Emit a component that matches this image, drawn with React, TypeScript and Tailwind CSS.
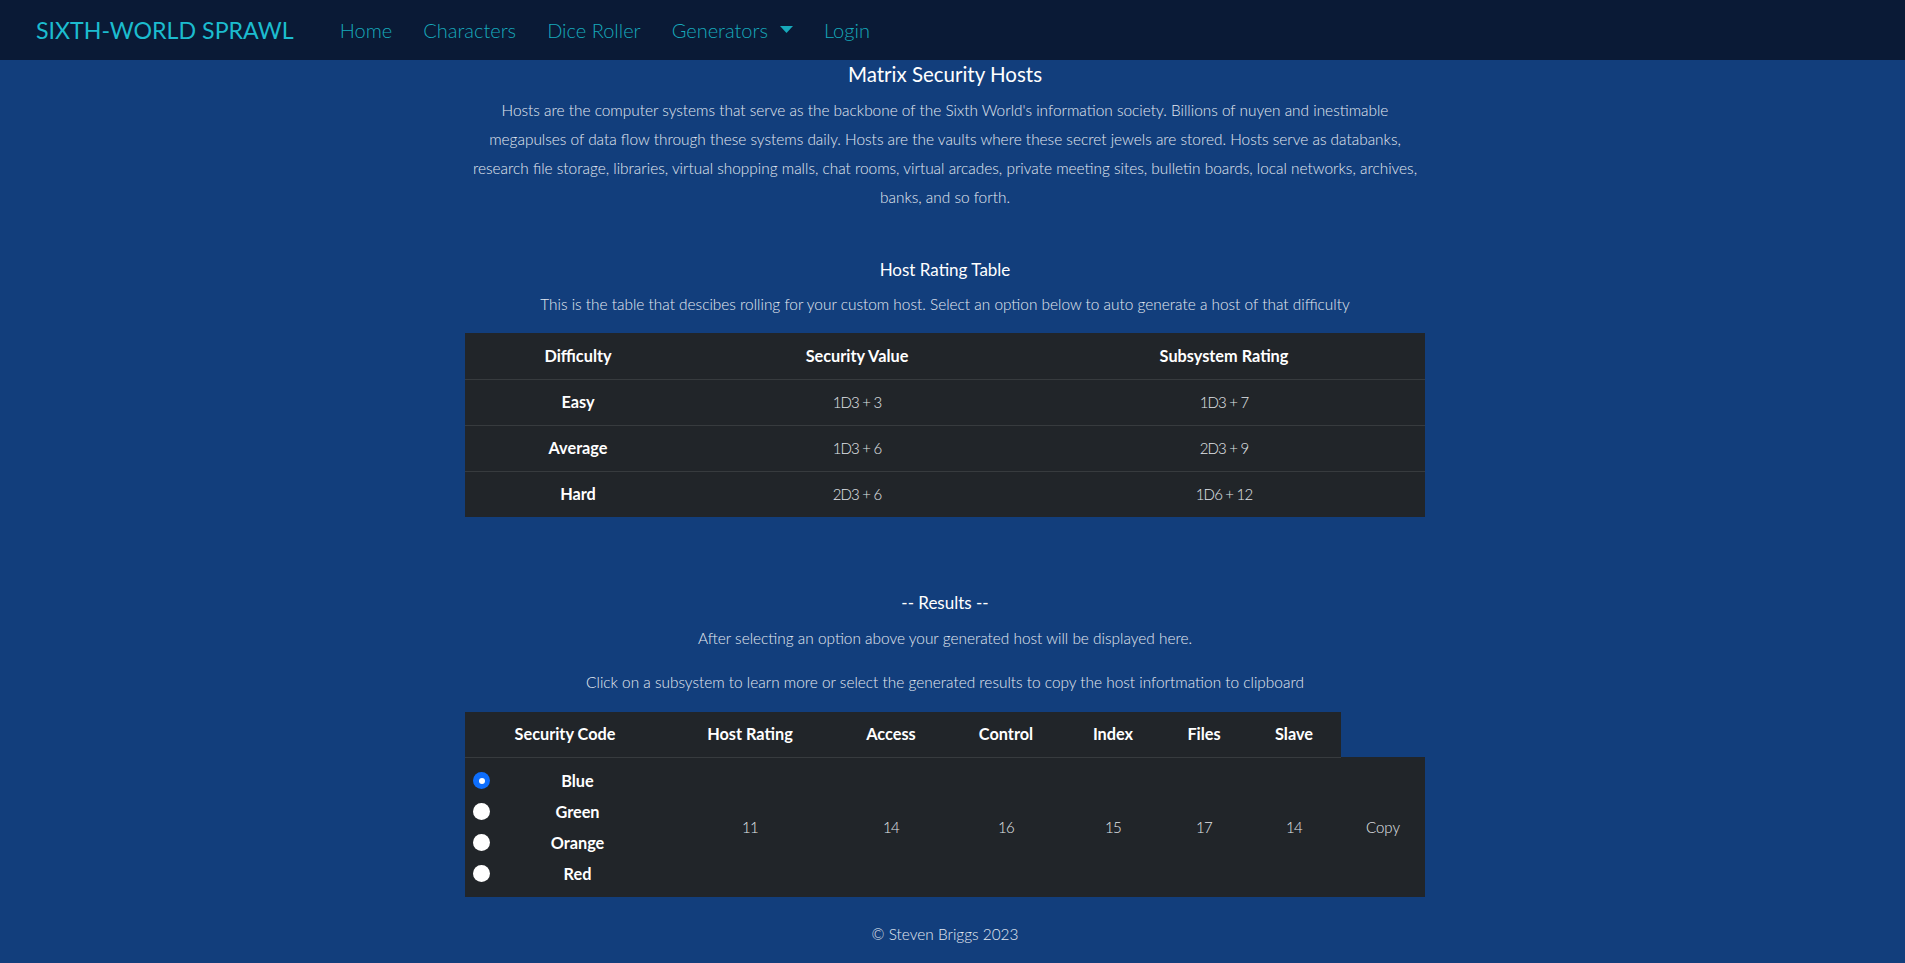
const navLinks = ["Home", "Characters", "Dice Roller"];

const ratingRows = [
  { level: "Easy", security: "1D3 + 3", subsystem: "1D3 + 7" },
  { level: "Average", security: "1D3 + 6", subsystem: "2D3 + 9" },
  { level: "Hard", security: "2D3 + 6", subsystem: "1D6 + 12" },
];

const resultCols = [
  { label: "Host Rating", w: "w-[170px]", value: "11" },
  { label: "Access", w: "w-[112px]", value: "14" },
  { label: "Control", w: "w-[118px]", value: "16" },
  { label: "Index", w: "w-[96px]", value: "15" },
  { label: "Files", w: "w-[86px]", value: "17" },
  { label: "Slave", w: "w-[94px]", value: "14" },
];

const codes = ["Blue", "Green", "Orange", "Red"];

const intro = [
  "Hosts are the computer systems that serve as the backbone of the Sixth World's information society. Billions of nuyen and inestimable",
  "megapulses of data flow through these systems daily. Hosts are the vaults where these secret jewels are stored. Hosts serve as databanks,",
  "research file storage, libraries, virtual shopping malls, chat rooms, virtual arcades, private meeting sites, bulletin boards, local networks, archives,",
  "banks, and so forth.",
];

function Radio({ checked }: { checked?: boolean }) {
  return checked ? (
    <span className="flex h-[17px] w-[17px] shrink-0 items-center justify-center rounded-full bg-[#0d6efd]">
      <span className="h-[6px] w-[6px] rounded-full bg-white" />
    </span>
  ) : (
    <span className="h-[17px] w-[17px] shrink-0 rounded-full bg-white" />
  );
}

export default function App() {
  return (
    <div className="min-h-[963px] bg-[#123e7c] font-['Lato',sans-serif] font-light text-[#e3e9f1]">
      <nav className="flex h-[60px] items-center bg-[#0a1a36] pl-[36px]">
        <span className="text-[23.2px] font-normal text-[#1cbccf]">SIXTH-WORLD SPRAWL</span>
        <div className="ml-[46px] flex items-center gap-[31px] text-[20px] text-[#17a9bb]">
          {navLinks.map((l) => (
            <span key={l}>{l}</span>
          ))}
          <span className="flex items-center gap-[12px]">
            Generators
            <svg width="13" height="8" viewBox="0 0 13 8">
              <path d="M0 0h13L6.5 7z" fill="#17a9bb" />
            </svg>
          </span>
          <span>Login</span>
        </div>
      </nav>

      <main className="flex justify-center pr-[15px]">
        <div className="flex w-[960px] flex-col items-center text-center text-[15.4px]">
          <h4 className="text-[20.5px] font-normal leading-[29px] text-white">Matrix Security Hosts</h4>
          <p className="mt-[7px] leading-[29px]">
            {intro.map((line) => (
              <span key={line} className="block whitespace-nowrap">
                {line}
              </span>
            ))}
          </p>

          <h5 className="mt-[44px] text-[17px] font-normal leading-[28px] text-white">Host Rating Table</h5>
          <p className="mt-[6px] leading-[28px]">
            This is the table that descibes rolling for your custom host. Select an option below to auto generate a host of that difficulty
          </p>

          <table className="mt-[15px] w-[960px] border-collapse bg-[#212529] text-[16.3px]">
            <thead>
              <tr className="h-[46px] border-b border-[#373b3e] text-white">
                <th className="w-[226px] font-bold">Difficulty</th>
                <th className="w-[332px] font-bold">Security Value</th>
                <th className="font-bold">Subsystem Rating</th>
              </tr>
            </thead>
            <tbody>
              {ratingRows.map((r, i) => (
                <tr key={r.level} className={`h-[46px] ${i < 2 ? "border-b border-[#373b3e]" : ""}`}>
                  <td className="font-bold text-white">{r.level}</td>
                  <td className="text-[15px] tracking-[-0.8px] text-[#e2e6ea]">{r.security}</td>
                  <td className="text-[15px] tracking-[-0.8px] text-[#e2e6ea]">{r.subsystem}</td>
                </tr>
              ))}
            </tbody>
          </table>

          <h5 className="mt-[72px] text-[17px] font-normal leading-[28px] text-white">-- Results --</h5>
          <p className="mt-[7px] leading-[28px]">After selecting an option above your generated host will be displayed here.</p>
          <p className="mt-[16px] leading-[28px]">
            Click on a subsystem to learn more or select the generated results to copy the host infortmation to clipboard
          </p>

          <table className="mt-[16px] w-[960px] border-collapse text-[16.3px]">
            <thead>
              <tr className="h-[45px] text-white">
                <th className="w-[200px] border-b border-[#373b3e] bg-[#212529] font-bold">Security Code</th>
                {resultCols.map((c) => (
                  <th key={c.label} className={`${c.w} border-b border-[#373b3e] bg-[#212529] font-bold`}>
                    {c.label}
                  </th>
                ))}
              </tr>
            </thead>
            <tbody>
              <tr className="h-[140px] bg-[#212529]">
                <td className="pl-[8px]">
                  <div className="flex flex-col gap-[8px]">
                    {codes.map((c, i) => (
                      <div key={c} className="flex h-[23px] items-center">
                        <Radio checked={i === 0} />
                        <span className="flex-1 font-bold text-white">{c}</span>
                      </div>
                    ))}
                  </div>
                </td>
                {resultCols.map((c) => (
                  <td key={c.label} className="text-[15px] tracking-[-0.8px] text-[#e2e6ea]">
                    {c.value}
                  </td>
                ))}
                <td className="text-[15px] text-[#e2e6ea]">Copy</td>
              </tr>
            </tbody>
          </table>

          <footer className="mt-[23px] leading-[28px]">© Steven Briggs 2023</footer>
        </div>
      </main>
    </div>
  );
}
